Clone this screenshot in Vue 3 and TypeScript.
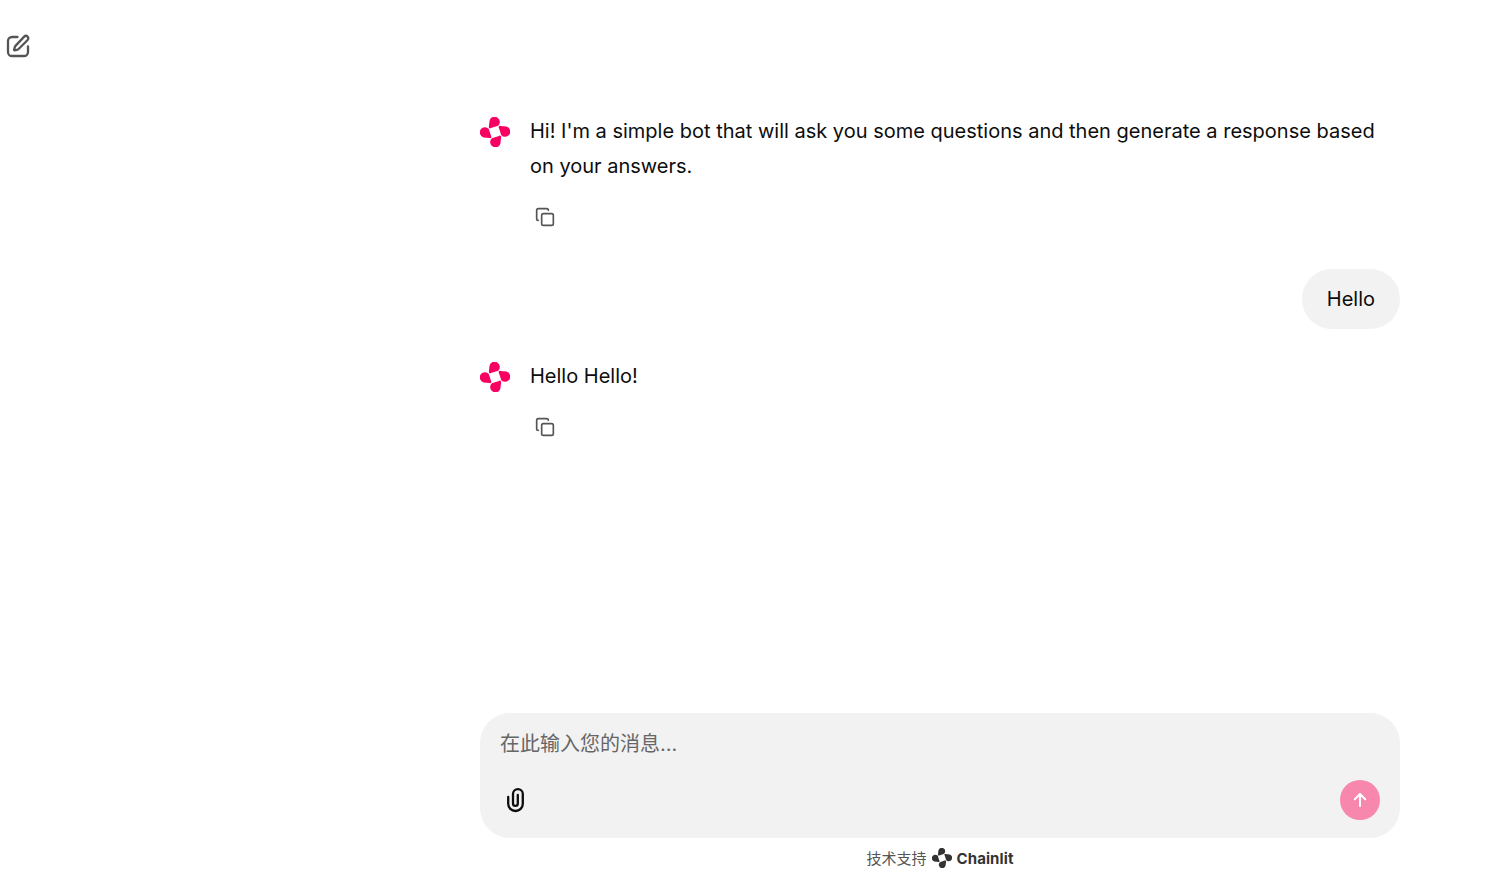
<template>
  <div class="page">
    <aside class="side">
      <button class="new-chat" type="button" aria-label="New chat">
        <svg width="24" height="24" viewBox="0 0 24 24" fill="none" stroke="currentColor" stroke-width="2.3" stroke-linecap="round" stroke-linejoin="round">
          <path d="M11.5 3H6a4 4 0 0 0-4 4v11a4 4 0 0 0 4 4h12a4 4 0 0 0 4-4v-5.5" />
          <path d="M18.2 2.6a2.4 2.4 0 0 1 3.4 3.4L12.6 15a2.4 2.4 0 0 1-1 .6l-2.9.8a.5.5 0 0 1-.6-.6l.8-2.9a2.4 2.4 0 0 1 .6-1z" />
        </svg>
      </button>
    </aside>

    <main class="chat">
      <div class="thread">
        <template v-for="msg in messages" :key="msg.id">
          <div v-if="msg.role === 'user'" class="user-row">
            <div class="bubble">{{ msg.text }}</div>
          </div>
          <div v-else class="bot-row">
            <svg class="avatar" width="30" height="30" viewBox="0 0 30 30" fill="#f80061">
              <path v-for="deg in petals" :key="deg" :transform="`rotate(${deg} 15 15)`" :d="petal" />
            </svg>
            <div class="bot-body">
              <p class="bot-text">{{ msg.text }}</p>
              <button class="copy" type="button" aria-label="Copy">
                <svg width="20" height="20" viewBox="0 0 24 24" fill="none" stroke="currentColor" stroke-width="2" stroke-linecap="round" stroke-linejoin="round">
                  <rect x="8" y="8" width="14" height="14" rx="2" />
                  <path d="M4 16c-1.1 0-2-.9-2-2V4c0-1.1.9-2 2-2h10c1.1 0 2 .9 2 2" />
                </svg>
              </button>
            </div>
          </div>
        </template>
      </div>

      <div class="composer">
        <div class="placeholder">在此输入您的消息...</div>
        <div class="tools">
          <svg class="clip" width="25" height="26" viewBox="0 0 25 26" fill="none" stroke="currentColor" stroke-width="2.3" stroke-linecap="round" stroke-linejoin="round">
            <path d="M5.2 10v6.7a7.3 7.3 0 0 0 14.6 0V7a4.9 4.9 0 0 0-9.8 0v9.5a2.4 2.4 0 0 0 4.8 0V8" />
          </svg>
          <button class="send" type="button" aria-label="Send">
            <svg width="18" height="18" viewBox="0 0 24 24" fill="none" stroke="currentColor" stroke-width="2.6" stroke-linecap="round" stroke-linejoin="round">
              <path d="M12 20V4" />
              <path d="M5 11l7-7 7 7" />
            </svg>
          </button>
        </div>
      </div>

      <div class="powered">
        <span>技术支持</span>
        <svg width="20" height="20" viewBox="0 0 30 30" fill="#333">
          <path v-for="deg in petals" :key="deg" :transform="`rotate(${deg} 15 15)`" :d="petal" />
        </svg>
        <strong>Chainlit</strong>
      </div>
    </main>
  </div>
</template>

<script setup lang="ts">
interface Message {
  id: number
  role: 'bot' | 'user'
  text: string
}

const petals = [0, 90, 180, 270]
const petal =
  'M9.6 11.3C8.9 11 8.8 10.3 8.9 9.6L9.6 3.6A5.2 5.2 0 1 1 18.2 8.7L11 11.1C10.5 11.3 10 11.5 9.6 11.3Z'

const messages: Message[] = [
  {
    id: 1,
    role: 'bot',
    text: "Hi! I'm a simple bot that will ask you some questions and then generate a response based on your answers.",
  },
  { id: 2, role: 'user', text: 'Hello' },
  { id: 3, role: 'bot', text: 'Hello Hello!' },
]
</script>

<style>
html,
body {
  margin: 0;
  background: #fff;
}
</style>

<style scoped>
.page {
  display: flex;
  height: 100vh;
  box-sizing: border-box;
  font-family: Inter, "Noto Sans CJK SC", sans-serif;
  color: #0d0d0d;
  overflow: hidden;
}

.side {
  width: 395px;
  flex: none;
  padding: 34px 0 0 6px;
  box-sizing: border-box;
}

button {
  background: none;
  border: none;
  padding: 0;
  display: flex;
  align-items: center;
  justify-content: center;
}

.new-chat {
  color: #555;
}

.chat {
  flex: 1;
  display: flex;
  flex-direction: column;
  align-items: center;
  min-width: 0;
}

.thread {
  width: 920px;
  flex: 1;
  padding-top: 114px;
  box-sizing: border-box;
}

.bot-row {
  display: flex;
  gap: 20px;
  margin-bottom: 37px;
}

.avatar {
  flex: none;
  margin-top: 3px;
}

.bot-body {
  flex: 1;
  min-width: 0;
}

.bot-text {
  margin: 0;
  font-size: 20px;
  line-height: 35px;
}

.copy {
  width: 30px;
  height: 30px;
  margin-top: 18px;
  color: #555;
}

.user-row {
  display: flex;
  justify-content: flex-end;
  margin-bottom: 30px;
}

.bubble {
  background: #f2f2f2;
  border-radius: 30px;
  padding: 12.5px 25px;
  font-size: 20px;
  line-height: 35px;
}

.composer {
  width: 920px;
  height: 125px;
  background: #f2f2f2;
  border-radius: 30px;
  padding: 16px 20px 18px;
  box-sizing: border-box;
  display: flex;
  flex-direction: column;
  justify-content: space-between;
}

.placeholder {
  font-size: 20px;
  line-height: 30px;
  color: #666;
}

.tools {
  display: flex;
  align-items: center;
  justify-content: space-between;
}

.clip {
  color: #0d0d0d;
  margin-left: 2.5px;
}

.send {
  width: 40px;
  height: 40px;
  border-radius: 50%;
  background: #f887ae;
  color: #fff;
}

.powered {
  height: 48px;
  padding-top: 10px;
  box-sizing: border-box;
  display: flex;
  align-items: flex-start;
  justify-content: center;
  gap: 5px;
  font-size: 15px;
  line-height: 20px;
  color: #555;
}

.powered span,
.powered strong {
  margin-top: 1px;
}

.powered strong {
  font-size: 15px;
  font-weight: 700;
  color: #333;
  letter-spacing: 0.1px;
}
</style>
